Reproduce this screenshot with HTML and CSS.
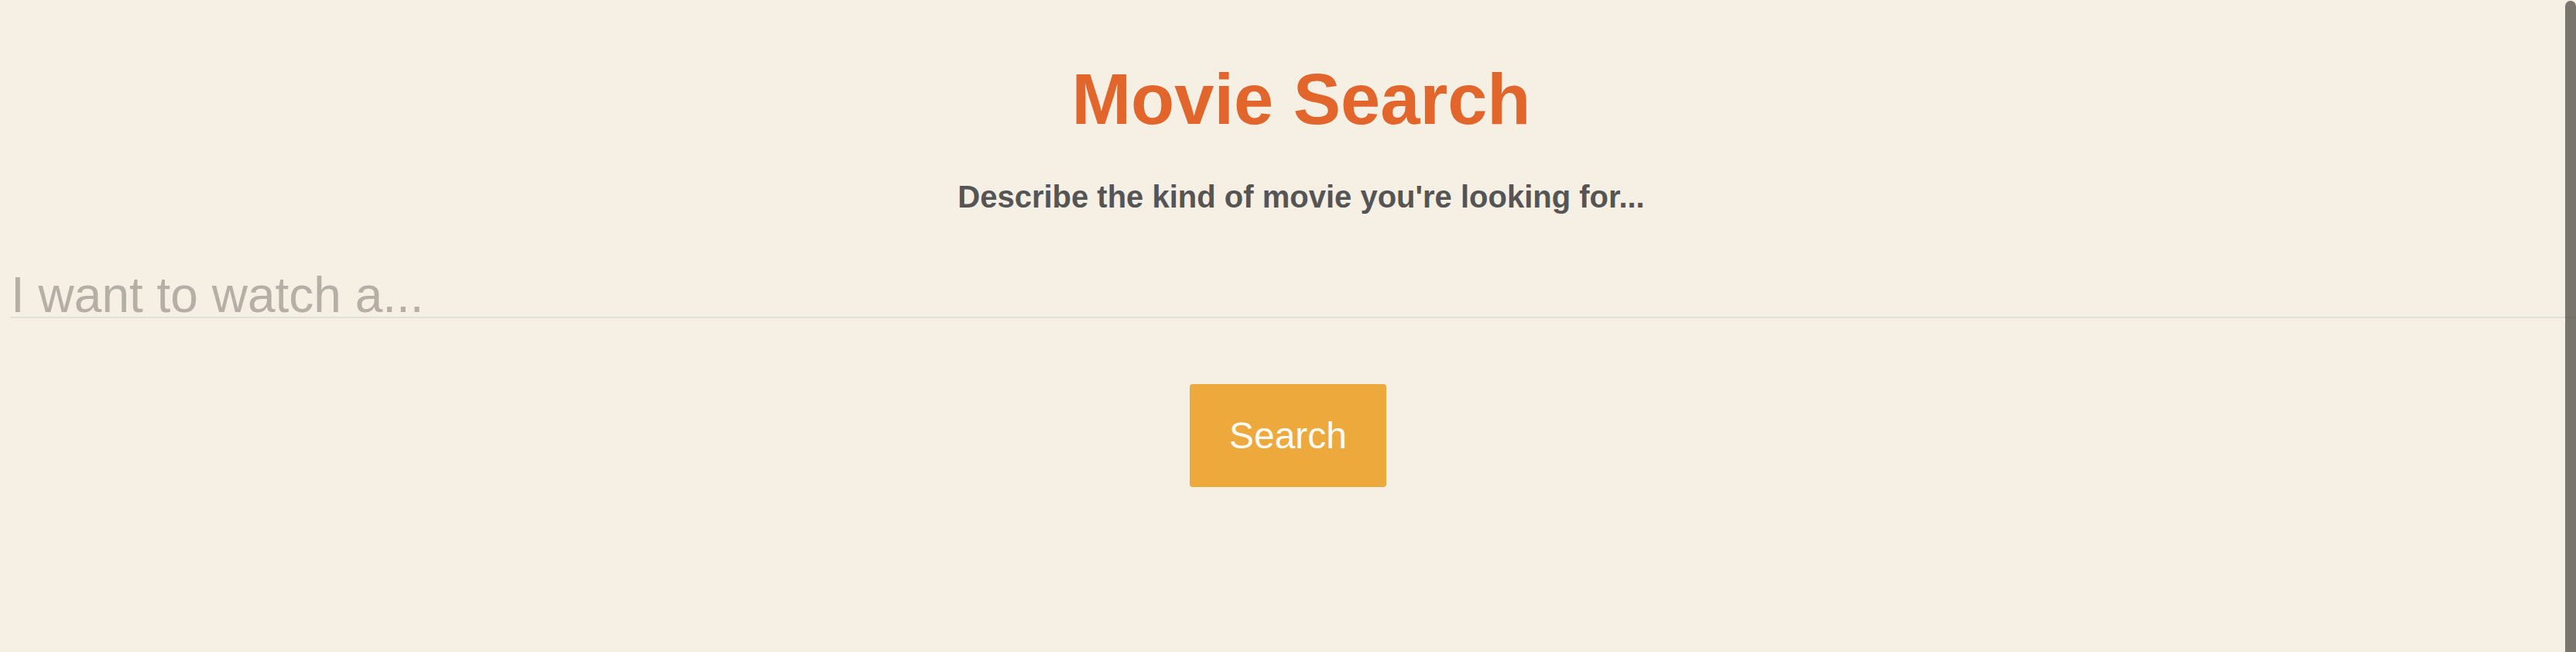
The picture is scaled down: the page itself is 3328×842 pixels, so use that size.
FILE: index.html
```html
<!DOCTYPE html>
<html lang="en">
<head>
<meta charset="utf-8">
<title>Movie Search</title>
<link rel="stylesheet" href="styles.css">
</head>
<body>
<main class="page">
  <form class="search-form">
    <h1 class="title">Movie Search</h1>
    <p class="subtitle">Describe the kind of movie you're looking for...</p>
    <input class="query" type="text" placeholder="I want to watch a...">
  </form>
  <div class="actions">
    <button class="search-btn" type="button">Search</button>
  </div>
</main>
<div class="scroll-thumb"></div>
</body>
</html>
```

FILE: styles.css
```css
html, body {
  margin: 0;
  padding: 0;
  background: #f6efe4;
  overflow-x: hidden;
}

body {
  font-family: "Liberation Sans", Arial, Helvetica, sans-serif;
  height: 842px;
}

.page {
  display: flex;
  flex-direction: column;
  padding-top: 82px;
}

.search-form {
  display: flex;
  flex-direction: column;
  margin: 0 -20px 0 14px;
}

.title {
  margin: 0;
  font-size: 92px;
  line-height: 1;
  font-weight: 700;
  color: #e2652c;
  text-align: center;
}

.subtitle {
  margin: 60px 0 0;
  font-size: 40px;
  line-height: 1;
  font-weight: 700;
  color: #555555;
  text-align: center;
}

.query {
  margin: 79px 0 0;
  box-sizing: content-box;
  height: 56px;
  padding: 0;
  border: none;
  border-bottom: 2px solid #e2dfd8;
  background: transparent;
  font-family: "Liberation Sans", Arial, Helvetica, sans-serif;
  font-size: 64px;
  color: #444;
  outline: none;
}

.query::placeholder {
  color: #b4b0a6;
  opacity: 1;
}

.actions {
  display: flex;
  justify-content: center;
  margin-top: 85px;
}

.search-btn {
  padding: 39px 51px;
  border: none;
  border-radius: 4px;
  background: #eea93d;
  color: #fcfbf8;
  font-family: "Liberation Sans", Arial, Helvetica, sans-serif;
  font-size: 48px;
  line-height: 1.15;
  cursor: pointer;
}

.scroll-thumb {
  position: fixed;
  top: 1px;
  right: 0;
  bottom: 0;
  width: 14px;
  border-radius: 7px 7px 0 0;
  background: rgba(40, 35, 30, 0.6);
}
```
